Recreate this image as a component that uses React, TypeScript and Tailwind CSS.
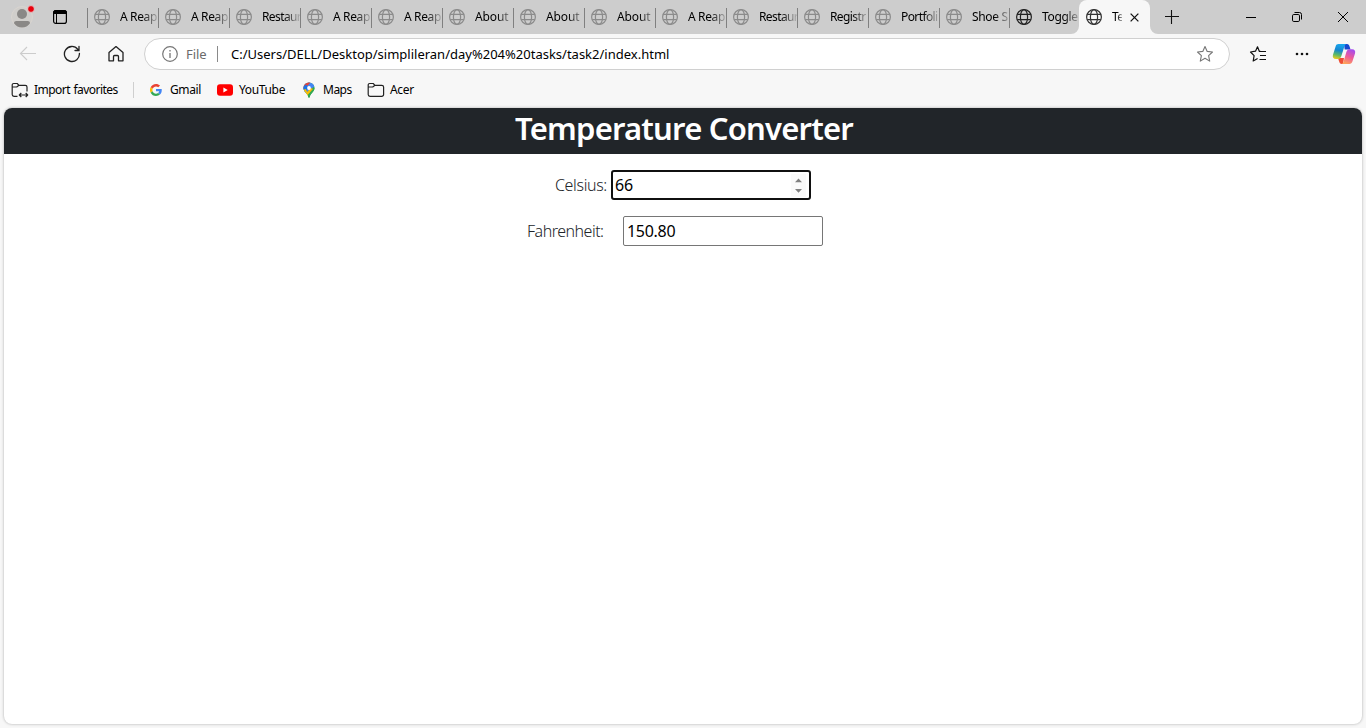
import { useState } from "react";

type IconProps = { className?: string };

const GlobeIcon = ({ className = "" }: IconProps) => (
  <svg viewBox="0 0 16 16" className={`size-4 shrink-0 ${className}`} fill="none" stroke="currentColor" strokeWidth="1.2">
    <circle cx="8" cy="8" r="7.4" />
    <ellipse cx="8" cy="8" rx="3.6" ry="7.4" />
    <path d="M1.2 5.4h13.6M1.2 10.6h13.6" />
  </svg>
);

const ProfileIcon = () => (
  <svg viewBox="0 0 24 24" className="size-6 shrink-0">
    <circle cx="11" cy="12" r="10.5" fill="#d0cecb" stroke="#dad6d1" strokeWidth="0.8" />
    <circle cx="11" cy="9" r="5" fill="#8a8886" />
    <path d="M3 18.2c0-1.5 1-2.2 2.300-2.200h11.400c1.300 0 2.300.7 2.300 2.200-1.700 2.700-4.700 4.300-8 4.300s-6.300-1.600-8-4.300z" fill="#8a8886" />
    <circle cx="20" cy="4" r="3.400" fill="#e8000c" stroke="#e3dfdf" strokeWidth="0.8" />
  </svg>
);

const TabMenuIcon = () => (
  <svg viewBox="0 0 16 16" className="size-4 shrink-0" fill="none" stroke="#000">
    <rect x="1.600" y="1.600" width="12.800" height="12.800" rx="2.200" strokeWidth="1.200" />
    <path d="M1.500 4.500V3.500a2 2 0 0 1 2-2h9a2 2 0 0 1 2 2v1z" fill="#000" />
    <path d="M4.500 5v9.500" strokeWidth="1" />
  </svg>
);

const BackIcon = () => (
  <svg viewBox="0 0 18 18" className="size-[18px]" fill="none" stroke="#cccccc" strokeWidth="1.100">
    <path d="M17 8.500H1.500M8 2L1.500 8.500 8 15" />
  </svg>
);

const RefreshIcon = () => (
  <svg viewBox="0 0 18 18" className="size-[18px]" fill="none" stroke="#222" strokeWidth="1.300" strokeLinecap="round">
    <path d="M16.400 8.300A7.500 7.500 0 1 1 14.800 4.300L16 5.500M16 1.500v4h-4" />
  </svg>
);

const HomeIcon = () => (
  <svg viewBox="0 0 18 18" className="size-[18px]" fill="none" stroke="#222" strokeWidth="1.300" strokeLinejoin="round">
    <path d="M2 7.600L9 1.600l7 6v8.200h-4.500v-4.300a1 1 0 0 0-1-1h-3a1 1 0 0 0-1 1v4.300H2z" />
  </svg>
);

const InfoIcon = () => (
  <svg viewBox="0 0 16 16" className="size-4 shrink-0" fill="none" stroke="#767676">
    <circle cx="8" cy="8" r="7.300" strokeWidth="1.200" />
    <path d="M8 7v5M8 4v1.500" strokeWidth="1.300" />
  </svg>
);

const StarIcon = () => (
  <svg viewBox="0 0 18 18" className="size-[18px]" fill="none" stroke="#767676" strokeWidth="1.100" strokeLinejoin="round">
    <path d="M9 1.500l2.200 4.900 5.300.6-3.900 3.600 1.100 5.500L9 13.300l-4.700 2.800 1.100-5.500L1.500 7l5.300-.6z" />
  </svg>
);

const FavoritesIcon = () => (
  <svg viewBox="0 0 18 18" className="size-[18px]" fill="none" stroke="#111" strokeWidth="1.200" strokeLinejoin="round">
    <path d="M11.500 6.400H10.400L8.500 1.800 6.500 6.200 1.500 7l3.600 3.700L4.200 16l4.400-2.500" />
    <path d="M10.500 6.500H17M11 10.500h6M10.500 14.500H17" />
  </svg>
);

const CopilotIcon = () => (
  <svg viewBox="0 0 24 22" className="h-[22px] w-6">
    <defs>
      <linearGradient id="cool" x1="0.400" y1="0" x2="0.200" y2="1">
        <stop offset="0" stopColor="#18a5ed" />
        <stop offset="0.400" stopColor="#1686cf" />
        <stop offset="0.700" stopColor="#59b86a" />
        <stop offset="1" stopColor="#f5cc18" />
      </linearGradient>
      <linearGradient id="warm" x1="0.700" y1="0" x2="0.300" y2="1">
        <stop offset="0" stopColor="#a44cf0" />
        <stop offset="0.500" stopColor="#ed5b99" />
        <stop offset="1" stopColor="#ffa657" />
      </linearGradient>
    </defs>
    <path d="M12 1h3c1.500 0 2.200 1 2.600 2.400l.9 3.100h-5.800z" fill="#1749cf" />
    <path d="M6 15h6l-1 6H9.700c-1.300 0-2-.8-2.400-2z" fill="#ee4d35" />
    <path d="M6.500 1h7.800c-1.200.4-1.600 1.300-2 2.700L9.500 12.500C8.900 14.600 8 16 6 16H4c-2.700 0-3.700-1.800-3-4.300L3.600 3.400C4.100 1.800 5 1 6.500 1z" fill="url(#cool)" />
    <path d="M17.500 6.200H20c2.700 0 3.700 1.800 3 4.300l-2.600 8.100c-.5 1.600-1.500 2.400-3 2.400H9.700c1.200-.4 1.600-1.300 2-2.700l2.500-8.700c.6-2.100 1.300-3.400 3.300-3.400z" fill="url(#warm)" />
  </svg>
);

const FolderIcon = ({ transfer = false }: { transfer?: boolean }) => (
  <svg viewBox="0 0 18 16" className="h-4 w-[18px] shrink-0" fill="none" stroke="#222" strokeWidth="1.200" strokeLinejoin="round">
    {transfer ? (
      <>
        <path d="M6.500 14.300H3A1.800 1.800 0 0 1 1.200 12.500V3A1.500 1.500 0 0 1 2.700 1.500h3.500L8 3.300h6.300A1.700 1.700 0 0 1 16 5v4.500M1.500 5h4.200L8 3.300" />
        <path d="M8.500 13h8M10.300 11l-2 2 2 2M14.700 11l2 2-2 2" />
      </>
    ) : (
      <path d="M1.200 3A1.500 1.500 0 0 1 2.700 1.500h3.500L8 3.300h6.800a1.800 1.800 0 0 1 1.800 1.700v7.500a1.800 1.800 0 0 1-1.800 1.800H3a1.800 1.800 0 0 1-1.800-1.800zM1.500 5h4.200L8 3.300" />
    )}
  </svg>
);

const GoogleIcon = () => (
  <svg viewBox="0 0 48 48" className="size-3 shrink-0">
    <path fill="#EA4335" d="M24 9.500c3.500 0 6.700 1.200 9.200 3.600l6.900-6.900C35.900 2.400 30.500 0 24 0 14.600 0 6.500 5.400 2.600 13.200l8 6.200C12.400 13.700 17.700 9.500 24 9.500z" />
    <path fill="#4285F4" d="M47 24.500c0-1.600-.2-3.100-.4-4.500H24v9h12.900c-.6 3-2.200 5.500-4.700 7.200l7.700 6C44.400 38 47 31.800 47 24.500z" />
    <path fill="#FBBC05" d="M10.500 28.600a14.500 14.500 0 0 1 0-9.200l-8-6.200a24 24 0 0 0 0 21.600z" />
    <path fill="#34A853" d="M24 48c6.500 0 11.900-2.100 15.900-5.800l-7.700-6c-2.200 1.500-4.900 2.300-8.200 2.300-6.300 0-11.600-4.200-13.500-9.900l-8 6.200C6.500 42.600 14.600 48 24 48z" />
  </svg>
);

const YouTubeIcon = () => (
  <svg viewBox="0 0 16 12" className="h-3 w-4 shrink-0">
    <rect y="0.300" width="16" height="11.400" rx="3" fill="#f00" />
    <path d="M6.400 3.500v5l4.300-2.500z" fill="#fff" />
  </svg>
);

const MapsIcon = () => (
  <svg viewBox="0 0 12 16" className="h-4 w-3 shrink-0">
    <defs>
      <clipPath id="pin">
        <path d="M6 .5a5.500 5.500 0 0 0-5.500 5.500c0 3.800 4 5 4.700 9 .2.700 1.400.7 1.600 0 .7-4 4.700-5.200 4.700-9A5.500 5.500 0 0 0 6 .5z" />
      </clipPath>
    </defs>
    <g clipPath="url(#pin)">
      <rect width="12" height="16" fill="#34a853" />
      <path d="M0 0h12v4L0 13z" fill="#4285f4" />
      <path d="M0 0h8L1.500 7H0z" fill="#ea4335" />
      <path d="M3 2.500L6 6 0 12V5z" fill="#1a73e8" />
      <path d="M0 8l3-1 1 3 4-4 2 1-6 7H0z" fill="#fbbc04" />
      <path d="M12 5L5 13v3h7z" fill="#34a853" />
    </g>
    <circle cx="6" cy="6" r="1.900" fill="#fff" />
  </svg>
);

const tabs = ["A Reap", "A Reap", "Restaur", "A Reap", "A Reap", "About", "About", "About", "A Reap", "Restaur", "Registr", "Portfoli", "Shoe S", "Toggle"];

const TabStrip = () => (
  <div className="flex h-[34px] bg-[#cdcdcd]">
    <div className="flex w-[87px] shrink-0 pt-[5px] pl-[11px]">
      <ProfileIcon />
      <div className="pt-1 pl-[17px]">
        <TabMenuIcon />
      </div>
    </div>
    {tabs.map((title, i) => (
      <div key={i} className={`flex shrink-0 items-center ${i >= tabs.length - 2 ? "w-[70px]" : "w-[71px]"}`}>
        <div className="mt-0.5 h-5 w-px shrink-0 bg-[#808080]" />
        <GlobeIcon className={`ml-1.5 ${i === tabs.length - 1 ? "text-[#222]" : "text-[#8b8b8b]"}`} />
        <div className={`ml-2.5 w-[38px] shrink-0 overflow-hidden text-[12px] leading-4 whitespace-nowrap text-black [mask-image:linear-gradient(to_right,#000_58%,transparent_106%)] ${title.length > 6 ? "tracking-[-0.6px]" : title === "About" ? "tracking-[-0.1px]" : "tracking-[-0.35px]"}`}>
          {title}
        </div>
      </div>
    ))}
    <div className="relative flex w-[71px] shrink-0 items-center rounded-t-lg bg-[#f7f7f7] pl-[7px]">
      <svg viewBox="0 0 8 8" className="absolute bottom-0 -left-2 size-2" fill="#f7f7f7">
        <path d="M8 0v8H0a8 8 0 0 0 8-8z" />
      </svg>
      <svg viewBox="0 0 8 8" className="absolute -right-2 bottom-0 size-2" fill="#f7f7f7">
        <path d="M0 0v8h8a8 8 0 0 1-8-8z" />
      </svg>
      <GlobeIcon className="text-[#333]" />
      <div className="ml-2.5 w-[10px] overflow-hidden text-[12px] leading-4 tracking-[-0.7px] [mask-image:linear-gradient(to_right,#000_50%,transparent_125%)]">Te</div>
      <svg viewBox="0 0 10 10" className="ml-2 size-[9px]" stroke="#111" strokeWidth="1.400">
        <path d="M.7.700l8.600 8.600M9.300.700L.7 9.300" />
      </svg>
    </div>
    <div className="flex flex-1 items-center pl-[15px]">
      <svg viewBox="0 0 14 14" className="size-[14px]" stroke="#111" strokeWidth="1.100">
        <path d="M6.500 0v14M0 6.500h14" />
      </svg>
      <svg viewBox="0 0 10 10" className="ml-auto size-[10px]" stroke="#000">
        <path d="M0 5.500h10" />
      </svg>
      <svg viewBox="0 0 10 10" className="ml-9 size-[10px]" fill="none" stroke="#000">
        <rect x="0.500" y="2.500" width="7" height="7" rx="1.300" />
        <path d="M2.500.500h5a2 2 0 0 1 2 2v5" />
      </svg>
      <svg viewBox="0 0 10 10" className="mr-[18px] ml-9 size-[10px]" stroke="#000">
        <path d="M0 0l10 10M10 0L0 10" />
      </svg>
    </div>
  </div>
);

const Toolbar = () => (
  <div className="flex h-10 items-center">
    <div className="flex w-36 shrink-0 items-center gap-[26px] pl-[19px]">
      <BackIcon />
      <RefreshIcon />
      <HomeIcon />
    </div>
    <div className="flex h-8 w-[1086px] shrink-0 items-center rounded-full border border-[#d0d0d0] bg-white pr-[15px] pl-[17px]">
      <InfoIcon />
      <span className="ml-2 w-[31px] text-[13px] leading-5 tracking-[-0.1px] text-[#6b6b6b]">File</span>
      <span className="h-4 w-px bg-[#8a8a8a]" />
      <span className="ml-[13px] text-[13px] leading-5 whitespace-nowrap text-black">
        C:/Users/DELL/Desktop/simplileran/day%204%20tasks/task2/index.html
      </span>
      <span className="ml-auto">
        <StarIcon />
      </span>
    </div>
    <div className="flex items-center pl-[19px]">
      <FavoritesIcon />
      <svg viewBox="0 0 14 4" className="ml-7 h-1 w-[14px]" fill="#111">
        <circle cx="2" cy="2" r="1.300" />
        <circle cx="7" cy="2" r="1.300" />
        <circle cx="12" cy="2" r="1.300" />
      </svg>
      <div className="ml-[23px]">
        <CopilotIcon />
      </div>
    </div>
  </div>
);

const Bookmarks = () => (
  <div className="flex h-[34px] items-center pb-0.5 pl-[11px] text-[12px] leading-4 whitespace-nowrap text-black">
    <FolderIcon transfer />
    <span className="ml-[5px] w-[99px] tracking-[-0.55px] [word-spacing:1px]">Import favorites</span>
    <span className="h-4 w-px bg-[#cfcfcf]" />
    <span className="ml-4">
      <GoogleIcon />
    </span>
    <span className="ml-2 w-[47px] tracking-[-0.4px]">Gmail</span>
    <YouTubeIcon />
    <span className="ml-1.5 w-16 tracking-[-0.35px]">YouTube</span>
    <MapsIcon />
    <span className="ml-2 w-11 tracking-[-0.5px]">Maps</span>
    <FolderIcon />
    <span className="ml-[5px] tracking-[-0.3px]">Acer</span>
  </div>
);

const Converter = () => {
  const [celsius, setCelsius] = useState("66");
  const fahrenheit = celsius === "" ? "" : ((Number(celsius) * 9) / 5 + 32).toFixed(2);
  return (
    <main className="mx-1 h-[616px] overflow-hidden rounded-lg bg-white shadow-[0_0_3px_rgba(0,0,0,0.3)]">
      <h1 className="flex h-[46px] justify-center bg-[#212529] pt-px pl-0.5 text-[31px] leading-[38px] font-semibold tracking-[-0.8px] text-white">
        Temperature Converter
      </h1>
      <div className="mt-4 flex h-[30px] items-center pl-[551px] text-[16px] font-light text-[#212529]">
        <label htmlFor="celsius" className="w-14 tracking-[-0.35px] whitespace-nowrap">Celsius:</label>
        <div className="flex h-[30px] w-[200px] items-center rounded-[3px] border-2 border-[#101010] bg-white pr-[3px] pl-0.5">
          <input id="celsius" value={celsius} onChange={(e) => setCelsius(e.target.value)} className="w-0 flex-1 text-[16px] font-normal tracking-[-0.25px] text-black outline-none" />
          <span className="flex h-[23px] w-[15px] items-center justify-center bg-[#fafafa]">
            <svg viewBox="0 0 7 15" className="h-[15px] w-[7px]" fill="#808080">
              <path d="M0 4.300L3.500.500 7 4.300zM0 11h7L3.500 14.800z" />
            </svg>
          </span>
        </div>
      </div>
      <div className="mt-4 flex h-[30px] items-center pl-[523px] text-[16px] font-light text-[#212529]">
        <label htmlFor="fahrenheit" className="w-24 tracking-[-0.5px] whitespace-nowrap">Fahrenheit:</label>
        <input id="fahrenheit" readOnly value={fahrenheit} className="h-[30px] w-[200px] rounded-[2px] border border-[#767676] bg-white px-[3px] text-[16px] font-normal tracking-[-0.3px] text-black outline-none" />
      </div>
    </main>
  );
};

export default function App() {
  return (
    <div className="h-[728px] w-[1366px] overflow-hidden bg-[#f7f7f7] font-['Noto_Sans',sans-serif]">
      <TabStrip />
      <Toolbar />
      <Bookmarks />
      <Converter />
    </div>
  );
}
